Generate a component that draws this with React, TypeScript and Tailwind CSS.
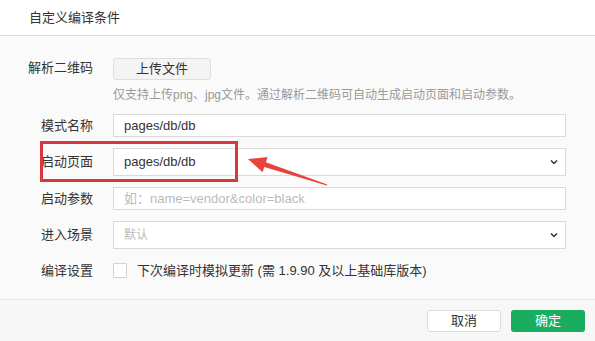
import React from 'react'

const font = { fontFamily: '"Liberation Sans", "Noto Sans CJK SC", sans-serif' }

const Chevron = () => (
  <svg width="8" height="5" viewBox="0 0 8 5" className="absolute right-[7px] top-1/2 -translate-y-1/2">
    <path d="M1 1 L4 4 L7 1" fill="none" stroke="#333" strokeWidth="1.5" />
  </svg>
)

const Row = ({ label, children, className = '' }: { label: string; children: React.ReactNode; className?: string }) => (
  <div className={`flex items-center ${className}`}>
    <div className="w-[93px] shrink-0 text-right text-[13px] text-[#333]">{label}</div>
    <div className="ml-[20px] w-[453px]">{children}</div>
  </div>
)

const App = () => {
  return (
    <div className="relative w-[595px] h-[341px] flex flex-col bg-white overflow-hidden" style={font}>
      {/* header */}
      <div className="h-[36px] shrink-0 flex items-center pl-[29px] text-[13px] text-[#333] border-b border-[#dcdcdc]">
        自定义编译条件
      </div>

      {/* body */}
      <div className="flex-1 bg-[#fafafa] pt-[20px] border-b border-[#e6e6e6]">
        <Row label="解析二维码">
          <button className="w-[98px] h-[22px] bg-[#f4f4f4] border border-[#dedede] rounded-[3px] text-[13px] text-[#333] leading-none">
            上传文件
          </button>
        </Row>
        <div className="ml-[113px] mt-[7px] text-[12px] leading-[16px] text-[#999]">
          仅支持上传png、jpg文件。通过解析二维码可自动生成启动页面和启动参数。
        </div>

        <Row label="模式名称" className="mt-[11px]">
          <div className="h-[23px] bg-white border border-[#d9d9d9] flex items-center pl-[10px] text-[13px] text-[#333]">
            pages/db/db
          </div>
        </Row>
        <Row label="启动页面" className="mt-[11px]">
          <div className="relative h-[28px] bg-white border border-[#d9d9d9] flex items-center pl-[10px] text-[13px] text-[#333]">
            pages/db/db
            <Chevron />
          </div>
        </Row>
        <Row label="启动参数" className="mt-[11px]">
          <div className="h-[23px] bg-white border border-[#d9d9d9] flex items-center pl-[10px] text-[13px] text-[#bbb]">
            如：name=vendor&amp;color=black
          </div>
        </Row>
        <Row label="进入场景" className="mt-[11px]">
          <div className="relative h-[28px] bg-white border border-[#d9d9d9] flex items-center pl-[10px] text-[12px] text-[#bbb]">
            默认
            <Chevron />
          </div>
        </Row>
        <Row label="编译设置" className="mt-[10px] h-[23px]">
          <div className="flex items-center">
            <span className="w-[14px] h-[15px] bg-white border border-[#d4d4d4]" />
            <span className="ml-[10px] text-[13px] text-[#333]">下次编译时模拟更新 (需 1.9.90 及以上基础库版本)</span>
          </div>
        </Row>
      </div>

      {/* footer */}
      <div className="h-[41px] shrink-0 bg-[#f7f7f7] flex items-center justify-end gap-[10px] pr-[10px]">
        <button className="w-[74px] h-[22px] bg-white border border-[#dcdcdc] rounded-[3px] text-[13px] text-[#333] leading-none">
          取消
        </button>
        <button className="w-[74px] h-[22px] bg-[#1aad5f] rounded-[3px] text-[13px] text-white leading-none">
          确定
        </button>
      </div>

      {/* annotation */}
      <div className="absolute left-[40px] top-[141px] w-[198px] h-[41px] border-[3px] border-[#d9363e]" />
      <svg className="absolute left-0 top-0 pointer-events-none" width="595" height="341">
        <polygon
          points="248,159 267.6,157 265.9,162.2 327.2,184.5 326.8,185.5 264.3,167 262.6,172.2"
          fill="#e8423a"
        />
      </svg>
    </div>
  )
}

export default App
